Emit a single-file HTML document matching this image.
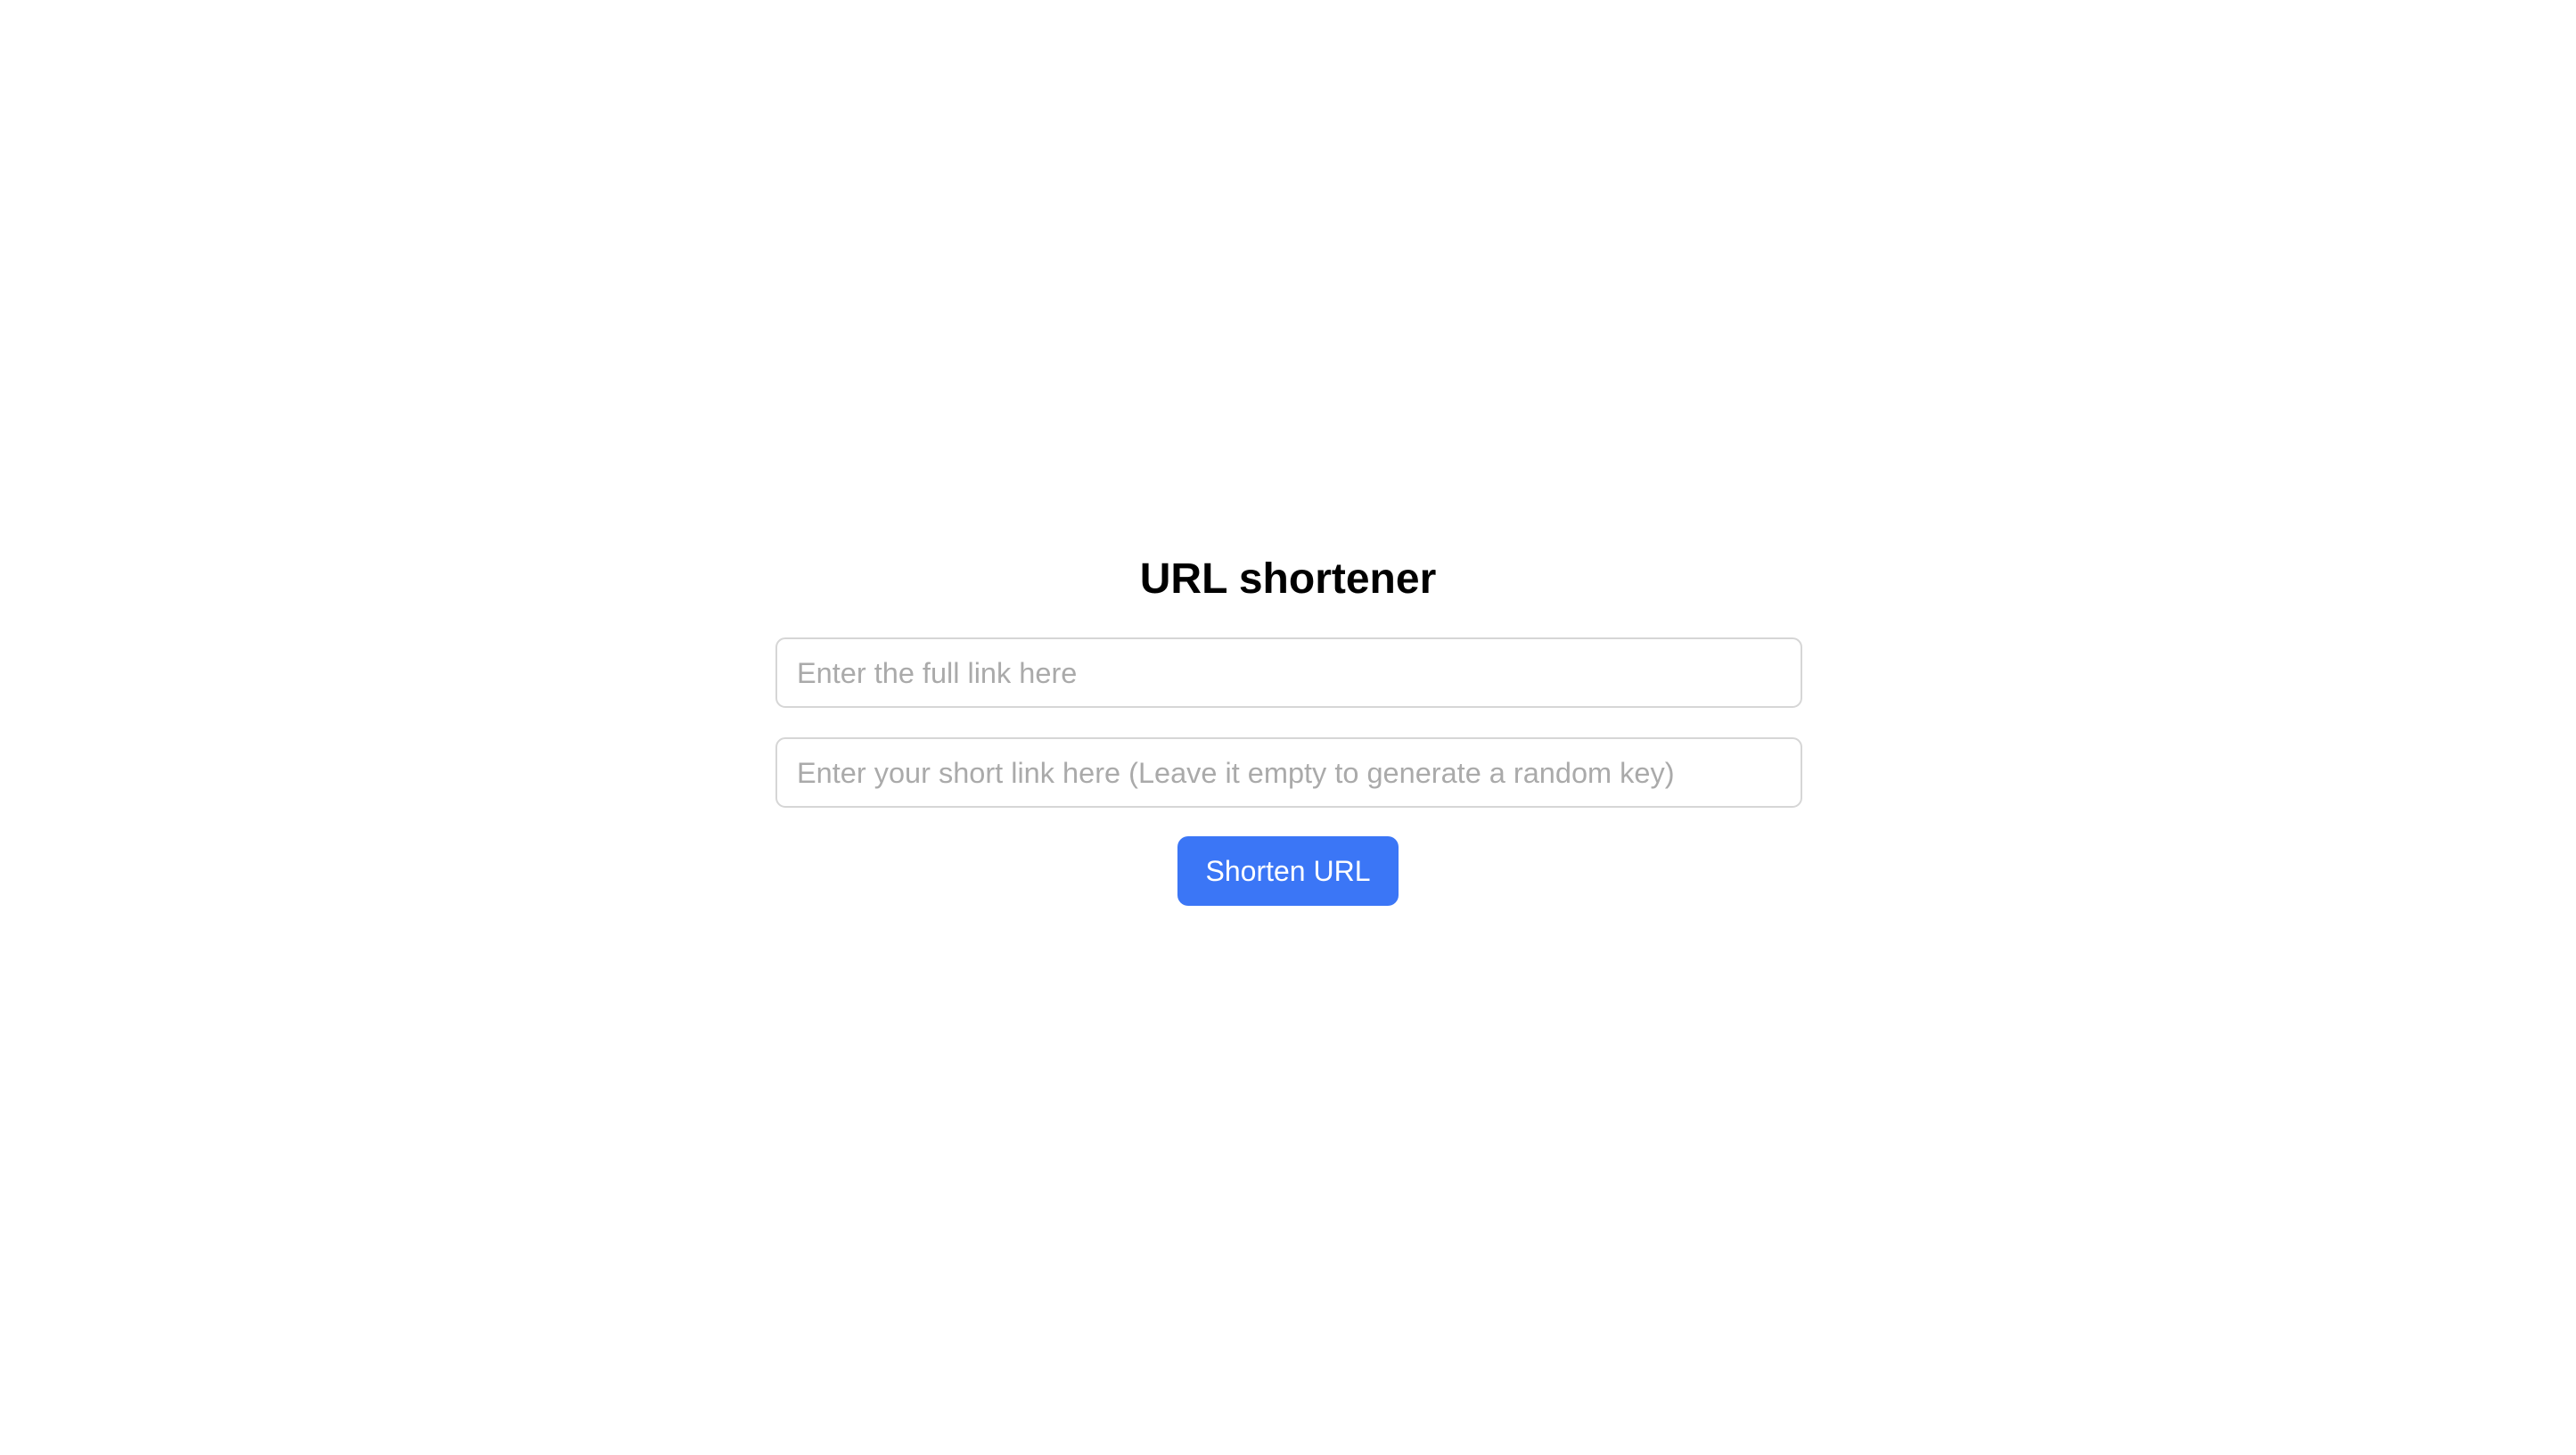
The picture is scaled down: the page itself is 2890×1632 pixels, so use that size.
<!DOCTYPE html>
<html><head><style>
html,body{margin:0;width:2890px;height:1632px;background:#fff;font-family:"Liberation Sans",sans-serif;}
h1{position:absolute;left:0;width:2890px;top:620px;margin:0;text-align:center;font-size:48px;font-weight:bold;color:#000;line-height:60px;}
.in{position:absolute;left:870px;width:1148px;height:75px;border:2px solid #d6d6d6;border-radius:11px;box-sizing:content-box;}
.in span{position:absolute;left:22px;top:1px;line-height:75px;font-size:32.5px;color:#aaa;}
.btn{position:absolute;left:1321px;top:938px;width:248px;height:78px;background:#3b76f6;border-radius:12px;color:#fff;font-size:32px;line-height:78px;text-align:center;}
</style></head><body>
<h1>URL shortener</h1>
<div class="in" style="top:715px"><span>Enter the full link here</span></div>
<div class="in" style="top:827px"><span>Enter your short link here (Leave it empty to generate a random key)</span></div>
<div class="btn">Shorten URL</div>
</body></html>
